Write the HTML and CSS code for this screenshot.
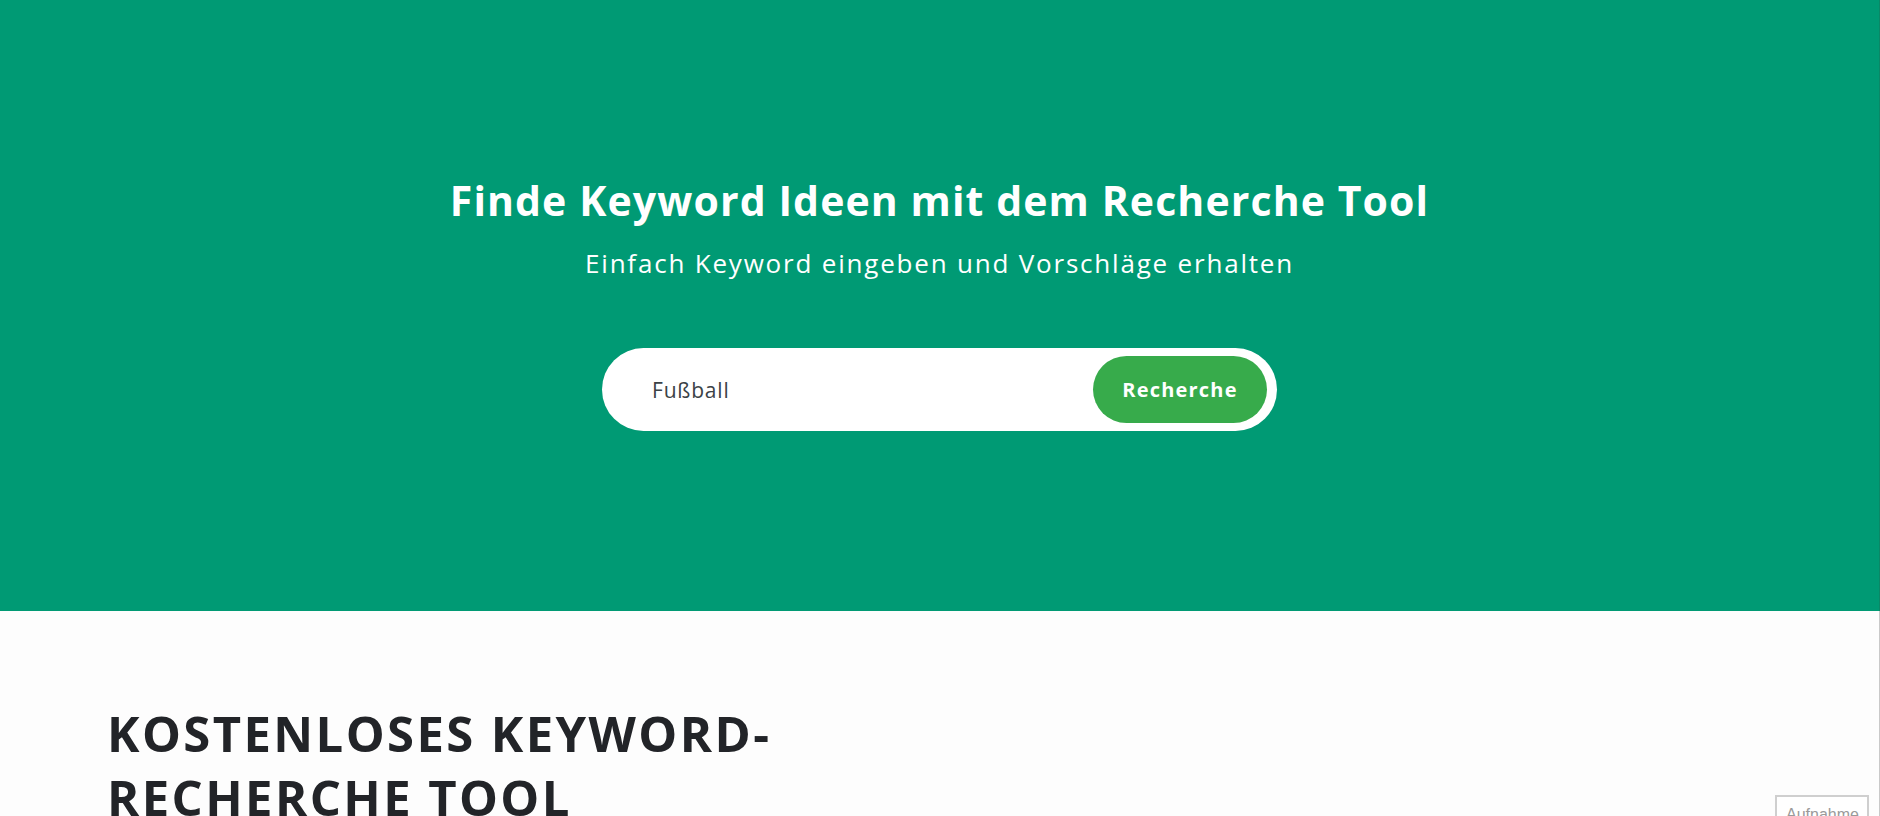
FILE: index.html
```html
<!DOCTYPE html>
<html lang="de">
<head>
<meta charset="utf-8">
<title>Keyword Recherche Tool</title>
<link rel="stylesheet" href="styles.css">
</head>
<body>
<section class="hero">
  <h1 class="hero-title">Finde Keyword Ideen mit dem Recherche Tool</h1>
  <p class="hero-sub">Einfach Keyword eingeben und Vorschläge erhalten</p>
  <form class="search">
    <input class="search-input" type="text" value="Fußball">
    <button class="search-btn" type="button">Recherche</button>
  </form>
</section>
<section class="intro">
  <h2 class="intro-title">Kostenloses Keyword-<br>Recherche Tool</h2>
</section>
<div class="rec-badge">Aufnahme</div>
</body>
</html>
```
FILE: styles.css
```css
* { box-sizing: border-box; }
html, body { margin: 0; padding: 0; }
body {
  background: #fdfdfd;
  font-family: "Open Sans", Lato, Arial, sans-serif;
  overflow: hidden;
  height: 816px;
}
.hero {
  background: #009a74;
  height: 611px;
  display: flex;
  flex-direction: column;
  align-items: center;
  padding-top: 175px;
  border-right: 1px solid #0b8766;
}
.hero-title {
  margin: 0;
  color: #fff;
  font-weight: 700;
  font-size: 41px;
  line-height: 50px;
  letter-spacing: 1.1px;
}
.hero-sub {
  margin: 21px 0 0;
  color: #fff;
  font-weight: 400;
  font-size: 26px;
  line-height: 34px;
  letter-spacing: 1.8px;
}
.search {
  margin-top: 68px;
  width: 675px;
  height: 83px;
  background: #fff;
  border-radius: 42px;
  display: flex;
  align-items: center;
  padding: 8px 10px 8px 50px;
}
.search-input {
  flex: 1;
  border: 0;
  outline: 0;
  background: transparent;
  font-family: "Open Sans", Lato, Arial, sans-serif;
  font-size: 21px;
  letter-spacing: 0.8px;
  color: #3b4246;
  padding: 0;
}
.search-btn {
  width: 174px;
  height: 67px;
  border: 0;
  border-radius: 34px;
  background: #37ab4b;
  color: #fff;
  font-family: "Open Sans", Lato, Arial, sans-serif;
  font-weight: 700;
  font-size: 20px;
  letter-spacing: 1.2px;
  padding: 0;
}
.intro {
  height: 205px;
  padding: 90px 0 0 107px;
  border-right: 1px solid #c9c9c9;
}
.intro-title {
  margin: 0;
  text-transform: uppercase;
  color: #222428;
  font-weight: 700;
  font-size: 49px;
  line-height: 64px;
  letter-spacing: 2.4px;
}
.rec-badge {
  position: fixed;
  left: 1775px;
  top: 795px;
  width: 94px;
  height: 40px;
  border: 2px solid #cfcfcf;
  background: #fff;
  color: #9a9a9a;
  font-family: "Liberation Sans", Arial, sans-serif;
  font-size: 16px;
  padding: 9px 0 0 9px;
}
```
